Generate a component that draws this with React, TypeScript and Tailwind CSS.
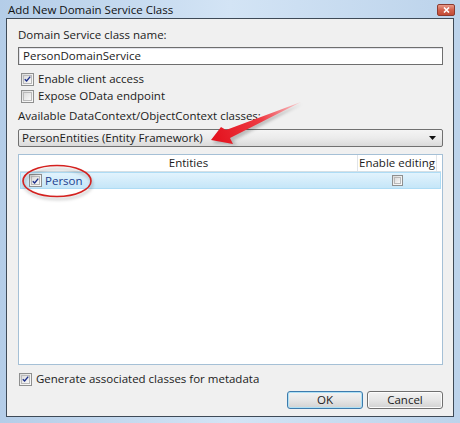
import type { ReactNode } from "react";

function CheckBox({ checked, small }: { checked?: boolean; small?: boolean }) {
  const size = small ? "h-[11px] w-[11px]" : "h-[13px] w-[13px]";
  return (
    <span
      className={`${size} flex shrink-0 items-center justify-center border border-[#8e8f8f] bg-gradient-to-br from-[#d8d8d8] via-[#f0f0f0] to-[#fafafa] p-[1px]`}
    >
      <span className="flex h-full w-full items-center justify-center border border-[#b9b9b9] bg-gradient-to-br from-[#dcdcdc] to-[#f8f8f8]">
        {checked && (
          <svg width="9" height="8" viewBox="0 0 9 8">
            <path d="M1 4.2 L3.4 6.6 L8 1" fill="none" stroke="#1c2f8a" strokeWidth="1.8" />
          </svg>
        )}
      </span>
    </span>
  );
}

function CheckRow({ checked, children, indent }: { checked?: boolean; children: ReactNode; indent: string }) {
  return (
    <div className={`flex h-[14px] items-center gap-[4px] ${indent}`}>
      <CheckBox checked={checked} />
      <span>{children}</span>
    </div>
  );
}

function Button({ children, isDefault }: { children: ReactNode; isDefault?: boolean }) {
  return (
    <button
      className={`flex h-[18px] w-[76px] items-center justify-center rounded-[3px] border bg-gradient-to-b from-[#f3f3f3] via-[#e6e6e6] to-[#d2d2d2] ${
        isDefault ? "border-[#3d7bad] shadow-[inset_0_0_0_1px_#aee0f5]" : "border-[#707070] shadow-[inset_0_0_0_1px_#fcfcfc]"
      }`}
    >
      {children}
    </button>
  );
}

export default function App() {
  return (
    <div className="relative flex h-[423px] w-[460px] flex-col bg-gradient-to-r from-[#b4cde8] via-[#d3e4f5] to-[#bcd3eb] px-[6px] pb-[6px] font-['Open_Sans',sans-serif] text-[11.5px] leading-[14px] text-[#1b1b1b]">
      {/* title bar */}
      <div className="flex h-[18px] items-start justify-between pl-[2px]">
        <span className="mt-[3px] text-[11.5px] leading-[14px] text-[#111]">Add New Domain Service Class</span>
        <span className="mr-[-1px] mt-[4px] flex h-[12px] w-[18px] items-center justify-center rounded-[2px] border border-[#8c3b30] bg-gradient-to-b from-[#e79a8a] via-[#d2604c] to-[#c24a35]">
          <svg width="7" height="6" viewBox="0 0 7 6">
            <path d="M1 0.5 L6 5.5 M6 0.5 L1 5.5" stroke="#fff" strokeWidth="1.6" />
          </svg>
        </span>
      </div>

      {/* client area */}
      <div className="flex flex-1 flex-col border border-[#3e4a57] bg-[#f0f0f0] pb-[7px] pl-[11px] pr-[10px] pt-[9px]">
        <div className="h-[14px]">Domain Service class name:</div>
        <div className="mt-[5px] flex h-[18px] items-center border border-[#6e6e6e] bg-white pl-[4px] shadow-[inset_1px_1px_0_#e2e3ea]">
          PersonDomainService
        </div>

        <div className="mt-[7px]">
          <CheckRow checked indent="ml-[3px]">Enable client access</CheckRow>
        </div>
        <div className="mt-[3px]">
          <CheckRow indent="ml-[3px]">Expose OData endpoint</CheckRow>
        </div>

        <div className="mt-[6px] h-[14px]">Available DataContext/ObjectContext classes:</div>
        <div className="mt-[6px] flex h-[18px] items-center justify-between rounded-[2px] border border-[#707070] bg-gradient-to-b from-[#f4f4f4] via-[#ebebeb] to-[#dadada] pl-[3px] pr-[6px]">
          <span>PersonEntities (Entity Framework)</span>
          <svg width="7" height="4" viewBox="0 0 7 4">
            <path d="M0 0 H7 L3.5 4 Z" fill="#111" />
          </svg>
        </div>

        {/* entity grid */}
        <div className="mt-[7px] flex flex-1 flex-col border border-[#a5c0d6] bg-white pl-[1px] pr-[1px]">
          <div className="flex h-[17px] border-b border-[#d5dfe5]">
            <div className="flex flex-1 items-center justify-center">Entities</div>
            <div className="flex w-[80px] items-center justify-center border-l border-r border-[#e0e4e8]">Enable editing</div>
            <div className="w-[4px]" />
          </div>
          <div className="flex h-[17px] items-center border border-[#aedcf5] bg-gradient-to-b from-[#e2f3fd] to-[#c5e6f8]">
            <div className="flex flex-1 items-center gap-[3px] pl-[8px]">
              <CheckBox checked />
              <span className="text-[#1d3f8f]">Person</span>
            </div>
            <div className="flex w-[80px] items-center justify-center">
              <CheckBox small />
            </div>
            <div className="w-[3px]" />
          </div>
        </div>

        <div className="mt-[7px]">
          <CheckRow checked indent="ml-[1px]">Generate associated classes for metadata</CheckRow>
        </div>

        <div className="mt-[5px] flex justify-end gap-[4px]">
          <Button isDefault>OK</Button>
          <Button>Cancel</Button>
        </div>
      </div>

      {/* callout marks drawn over the dialog */}
      <svg className="pointer-events-none absolute left-0 top-0" width="460" height="423" viewBox="0 0 460 423">
        <defs>
          <linearGradient id="arrowFill" x1="212" y1="140" x2="302" y2="103" gradientUnits="userSpaceOnUse">
            <stop offset="0" stopColor="#e3101c" />
            <stop offset="0.55" stopColor="#ee3b44" />
            <stop offset="1" stopColor="#fbd0d2" />
          </linearGradient>
          <filter id="soft" x="-20%" y="-20%" width="140%" height="160%">
            <feGaussianBlur stdDeviation="1.6" />
          </filter>
        </defs>
        <ellipse cx="58" cy="184" rx="34" ry="15" fill="none" stroke="#000" strokeOpacity="0.18" strokeWidth="2.5" filter="url(#soft)" />
        <ellipse cx="57" cy="181" rx="34" ry="15.5" fill="none" stroke="#d4211f" strokeWidth="1.6" />
        <path
          d="M213 143 L223 132 L229 134 L302 104 L233 141 L237 145 Z"
          fill="#000"
          fillOpacity="0.22"
          filter="url(#soft)"
        />
        <path d="M211 140 L221 127 L226 130 L301 102 L230 138 L233 144 Z" fill="url(#arrowFill)" />
      </svg>
    </div>
  );
}
